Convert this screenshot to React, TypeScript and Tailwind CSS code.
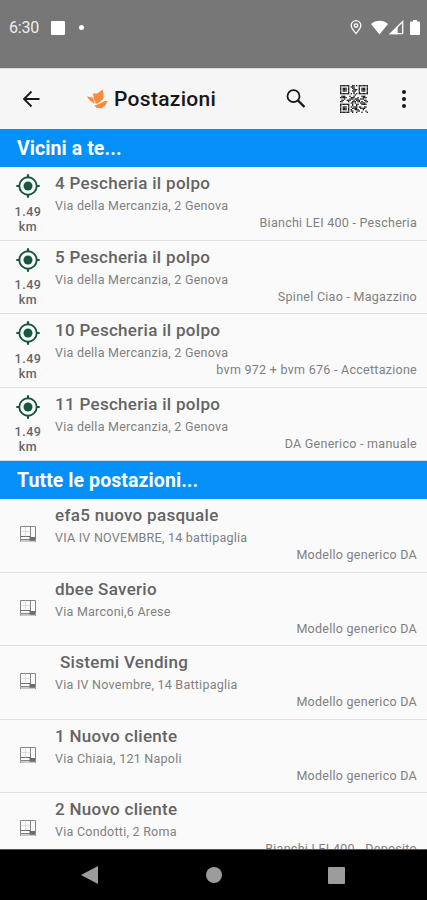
import React from "react";

type Station = { name: string; address: string; model: string; indent?: boolean };

const nearby: Station[] = [
  { name: "4 Pescheria il polpo", address: "Via della Mercanzia, 2 Genova", model: "Bianchi LEI 400 - Pescheria" },
  { name: "5 Pescheria il polpo", address: "Via della Mercanzia, 2 Genova", model: "Spinel Ciao - Magazzino" },
  { name: "10 Pescheria il polpo", address: "Via della Mercanzia, 2 Genova", model: "bvm 972 + bvm 676 - Accettazione" },
  { name: "11 Pescheria il polpo", address: "Via della Mercanzia, 2 Genova", model: "DA Generico - manuale" },
];

const all: Station[] = [
  { name: "efa5 nuovo pasquale", address: "VIA IV NOVEMBRE, 14 battipaglia", model: "Modello generico DA" },
  { name: "dbee Saverio", address: "Via Marconi,6 Arese", model: "Modello generico DA" },
  { name: "Sistemi Vending", address: "Via IV Novembre, 14 Battipaglia", model: "Modello generico DA", indent: true },
  { name: "1 Nuovo cliente", address: "Via Chiaia, 121 Napoli", model: "Modello generico DA" },
  { name: "2 Nuovo cliente", address: "Via Condotti, 2 Roma", model: "Bianchi LEI 400 - Deposito" },
];

const qr = [
  "111111100110101111111",
  "100000101110001000001",
  "101110100110001011101",
  "101110100011101011101",
  "101110100111001011101",
  "100000100010001000001",
  "111111101010101111111",
  "000000000001000000000",
  "011100010010000011100",
  "111110001110010001110",
  "000100011101110111000",
  "011001110010111000110",
  "110000100111011010011",
  "000000001101000111100",
  "111111100100110011110",
  "100000100100100000000",
  "101110101011101100110",
  "101110100111100111100",
  "101110101001110001000",
  "100000101100011000010",
  "111111100100100010001",
];

function QrIcon() {
  return (
    <svg className="h-7 w-7" viewBox="0 0 21 21" fill="#222">
      {qr.map((line, y) =>
        line.split("").map((c, x) => (c === "1" ? <rect key={`${x}-${y}`} x={x} y={y} width="1" height="1" /> : null)),
      )}
    </svg>
  );
}

function TargetIcon() {
  return (
    <svg className="block h-6 w-6" viewBox="0 0 24 24" fill="none" stroke="#17573f">
      <circle cx="12" cy="12" r="8.700" strokeWidth="1.900" />
      <circle cx="12" cy="12" r="4.5" fill="#17573f" stroke="none" />
      <path d="M12 .3v3.500M12 20.200v3.500M.3 12h3.500M20.200 12h3.500" strokeWidth="2.200" />
    </svg>
  );
}

function MachineIcon() {
  return (
    <svg className="block h-[18px] w-4" viewBox="0 0 16 18" fill="none" stroke="#858585">
      <path d="M.5 1.500h15v13H.5zM10.500 1.500v13" />
      <path d="M.5 11.500h10" stroke="#6c6c6c" />
      <path d="M5.500 1.500v10M.5 6.500h10" stroke="#d2d2d2" strokeWidth=".7" />
      <path d="M9.500 12h5.500v4H9.500z" fill="#6c6c6c" stroke="none" />
      <path d="M.5 14v3M15.500 14v3M1 16h14" stroke="#999" />
    </svg>
  );
}

function Row({ s, near }: { s: Station; near?: boolean }) {
  return (
    <div className="flex h-[73.5px] shrink-0 border-b border-[#dedede]">
      <div className="flex w-[55px] shrink-0 flex-col items-center">
        {near ? (
          <>
            <div className="pt-[7px]"><TargetIcon /></div>
            <div className="pl-px pt-[5.500px] text-center text-[12.5px] leading-[15px] font-medium tracking-[0.5px] text-[#666]">
              1.49<br />km
            </div>
          </>
        ) : (
          <div className="pt-[26px]"><MachineIcon /></div>
        )}
      </div>
      <div className="flex min-w-0 flex-1 flex-col whitespace-nowrap pr-[10px] pt-[5px]">
        <div className={`text-[17px] leading-[22px] font-medium tracking-[0.3px] text-[#646464] ${s.indent ? "pl-[5px]" : ""}`}>{s.name}</div>
        <div className="pt-[3px] text-[12.5px] leading-[18px] tracking-[0.25px] text-[#808080]">{s.address}</div>
        <div className="-mt-px text-right text-[12.5px] leading-[17px] tracking-[0.27px] text-[#808080]">{s.model}</div>
      </div>
    </div>
  );
}

function Section({ title }: { title: string }) {
  return (
    <div className="flex h-[38px] shrink-0 items-center bg-[#0490f8] pl-[17px] pt-px text-[19.500px] font-bold tracking-[0.08px] text-white">
      {title}
    </div>
  );
}

export default function App() {
  return (
    <div className="flex h-[900px] w-[427px] flex-col overflow-hidden bg-[#fafafa] font-['Roboto','Noto_Sans',sans-serif]">
      <div className="flex h-[68px] shrink-0 items-center bg-[#777] pb-[13px] pl-[9px] pr-[7px] text-white">
        <span className="w-[42px] text-[16px] tracking-[-0.2px] text-[#eee]">6:30</span>
        <span className="h-3.5 w-3.5 rounded-[1px] bg-white" />
        <span className="ml-[14px] h-[5px] w-[5px] rounded-full bg-white" />
        <svg className="ml-auto h-[15px] w-3" viewBox="0 0 12 15" fill="none" stroke="white" strokeWidth="1.3">
          <path d="M6 13.500C4.500 11.300 1.200 8.500 1.200 5.500a4.800 4.800 0 0 1 9.600 0C10.800 8.500 7.500 11.300 6 13.500Z" />
          <circle cx="6" cy="5.500" r="1.700" />
        </svg>
        <svg className="ml-[9px] h-[15px] w-[17px]" viewBox="0 0 17 15" fill="white"><path d="M0 4C5-.2 12-.2 17 4L8.500 14.500Z" /></svg>
        <svg className="ml-[1px] h-[15px] w-[15px]" viewBox="0 0 15 15" fill="none" stroke="white" strokeWidth="1.300">
          <path d="M1.500 13.700 13.700 1.500v12.200Z" />
          <path d="M1.500 13.700 8 7.500v6.200Z" fill="white" />
        </svg>
        <svg className="ml-[6px] h-[15px] w-[10px]" viewBox="0 0 10 15" fill="white"><path d="M3 0h4v1.500h2q1 0 1 1V14q0 1-1 1H1q-1 0-1-1V2.500q0-1 1-1h2Z" /></svg>
      </div>
      <div className="flex h-[61px] shrink-0 items-center border-t border-[#ddd] bg-[#f6f6f6] pl-[22px] pr-[21.5px]">
        <svg className="h-[18px] w-[18px]" viewBox="0 0 18 18" fill="none" stroke="#171717" strokeWidth="1.800"><path d="M17.500 9H2M9.500 1.500 2 9l7.500 7.500" /></svg>
        <svg className="ml-[46px] h-5 w-[22px]" viewBox="0 0 22 20" fill="#fb8b3c">
          <path d="M7 4.500 11.500 4.500 16.500.5 17.500 5 17.500 9.500 14 13 10 15 8 10.500Z" />
          <path d="M.5 7.500 6.500 8.500 9 15 4.500 12Z" />
          <path d="M8.500 16.500 13 15 18.500 12 21.500 12 19.500 16.500 15 19.500 10.500 18.700Z" />
        </svg>
        <span className="ml-[6px] w-[110px] whitespace-nowrap pt-[2px] text-[21px] font-medium tracking-[0.3px] text-[#171717]">Postazioni</span>
        <svg className="ml-[62px] h-5 w-5" viewBox="0 0 20 20" fill="none" stroke="#171717" strokeWidth="1.800"><circle cx="7.500" cy="7.200" r="6" /><path d="m12 11.500 6.500 6.500" strokeWidth="2.400" /></svg>
        <div className="ml-auto mr-[33.5px]"><QrIcon /></div>
        <svg className="h-[18px] w-1" viewBox="0 0 4 18" fill="#171717"><circle cx="2" cy="2" r="2" /><circle cx="2" cy="9" r="2" /><circle cx="2" cy="16" r="2" /></svg>
      </div>
      <div className="flex min-h-0 flex-1 flex-col overflow-hidden">
        <Section title="Vicini a te..." />
        {nearby.map((s) => <Row key={s.name} s={s} near />)}
        <Section title="Tutte le postazioni..." />
        {all.map((s) => <Row key={s.name} s={s} />)}
      </div>
      <div className="flex h-[51px] shrink-0 items-center justify-between border-t border-[#555] bg-black pl-[81px] pr-[82px]">
        <svg className="h-[18px] w-[17px]" viewBox="0 0 17 18" fill="#9c9c9c"><path d="M0 9 17 0v18Z" /></svg>
        <span className="ml-px h-4 w-4 rounded-full bg-[#9c9c9c]" />
        <span className="h-[17px] w-[17px] rounded-[1px] bg-[#9c9c9c]" />
      </div>
    </div>
  );
}
